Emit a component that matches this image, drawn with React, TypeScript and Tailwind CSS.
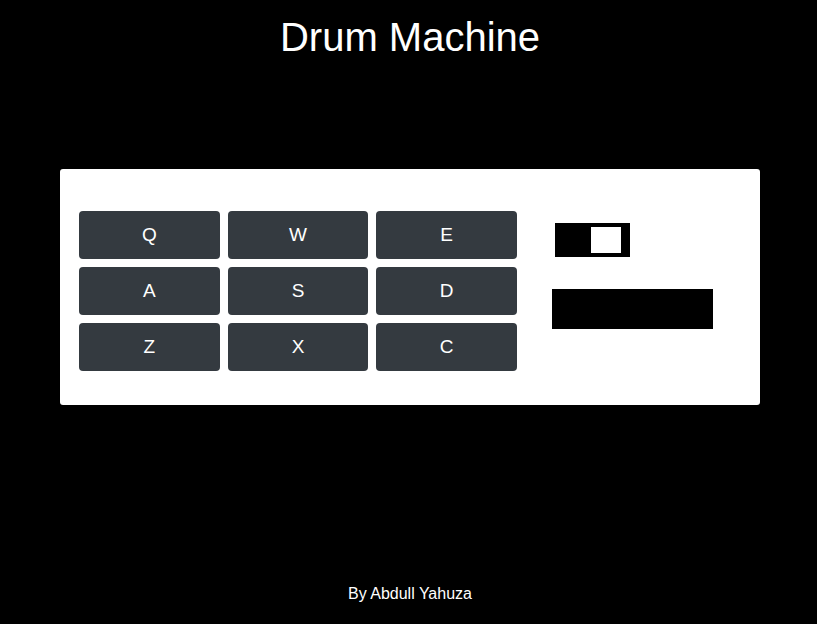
import React from "react";

const keys = ["Q", "W", "E", "A", "S", "D", "Z", "X", "C"];

export default function App() {
  return (
    <div
      className="w-full h-[624px] bg-black text-white flex flex-col items-center pl-[3px]"
      style={{ fontFamily: '"Liberation Sans", Arial, sans-serif' }}
    >
      <h1 className="mt-[13px] text-[40px] leading-[48px] font-normal text-center">
        Drum Machine
      </h1>
      <div className="mt-[108px] w-[700px] h-[236px] bg-white rounded-[3px] flex pl-[19px] pt-[42px]">
        <div className="w-[438px] grid grid-cols-3 gap-x-[8px] gap-y-[8px] auto-rows-[48px]">
          {keys.map((k) => (
            <button
              key={k}
              className="bg-[#343a40] text-white text-[19px] rounded-[4px] flex items-center justify-center"
            >
              {k}
            </button>
          ))}
        </div>
        <div className="ml-[35px] flex flex-col">
          <div className="mt-[12px] ml-[3px] w-[75px] h-[34px] bg-black flex items-center pl-[36px]">
            <div className="w-[30px] h-[26px] bg-white" />
          </div>
          <div className="mt-[32px] w-[161px] h-[40px] bg-black" />
        </div>
      </div>
      <p className="mt-[177px] text-[16px] leading-[24px]">By Abdull Yahuza</p>
    </div>
  );
}
